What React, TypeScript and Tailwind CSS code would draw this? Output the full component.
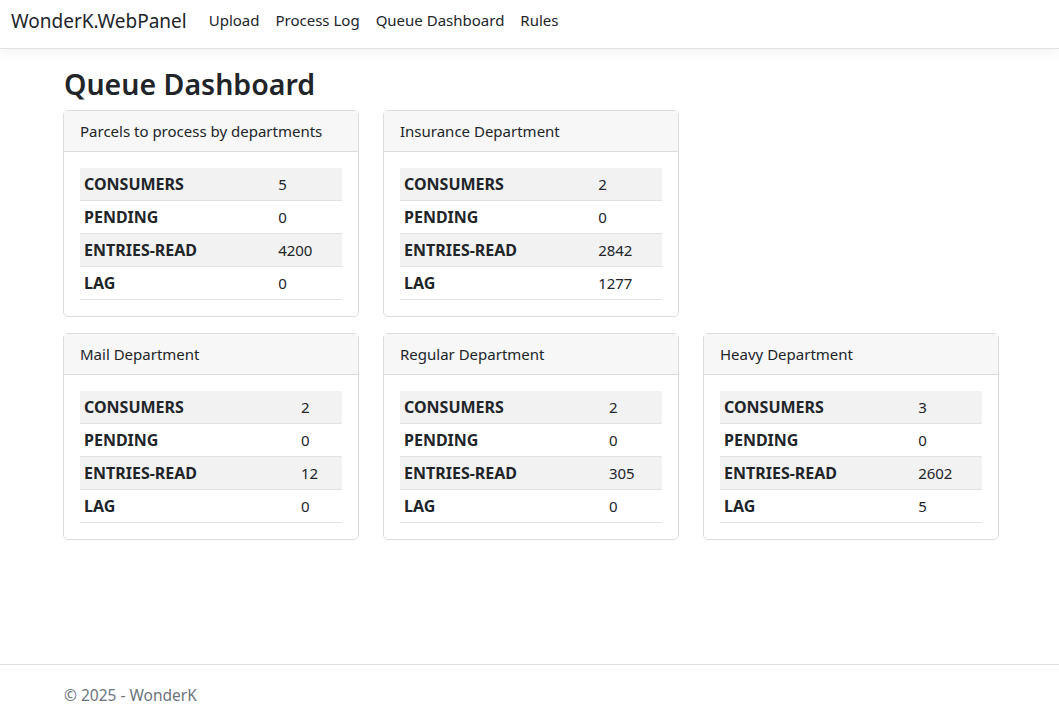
import React from "react";

type Stats = { consumers: number; pending: number; entriesRead: number; lag: number };

const groups: { title: string; stats: Stats | null }[] = [
  { title: "Parcels to process by departments", stats: { consumers: 5, pending: 0, entriesRead: 4200, lag: 0 } },
  { title: "Insurance Department", stats: { consumers: 2, pending: 0, entriesRead: 2842, lag: 1277 } },
  { title: "", stats: null },
  { title: "Mail Department", stats: { consumers: 2, pending: 0, entriesRead: 12, lag: 0 } },
  { title: "Regular Department", stats: { consumers: 2, pending: 0, entriesRead: 305, lag: 0 } },
  { title: "Heavy Department", stats: { consumers: 3, pending: 0, entriesRead: 2602, lag: 5 } },
];

function QueueCard({ title, stats }: { title: string; stats: Stats }) {
  const rows: [string, number][] = [
    ["CONSUMERS", stats.consumers],
    ["PENDING", stats.pending],
    ["ENTRIES-READ", stats.entriesRead],
    ["LAG", stats.lag],
  ];
  return (
    <div className="rounded-[5px] border border-[#dcdcdc] bg-white">
      <div className="border-b border-[#dcdcdc] bg-[#f7f7f7] px-4 py-2 text-[15px] leading-6 text-[#212529]">{title}</div>
      <div className="p-4">
        <table className="w-full border-collapse text-[15px] leading-6 text-[#212529]">
          <tbody>
            {rows.map(([label, value], i) => (
              <tr key={label} className={`border-b border-[#dee2e6] ${i % 2 === 0 ? "bg-[#f2f2f2]" : ""}`}>
                <td className="px-1 py-1 text-[16px] font-bold">{label}</td>
                <td className="px-1 py-1">{value}</td>
              </tr>
            ))}
          </tbody>
        </table>
      </div>
    </div>
  );
}

export default function App() {
  return (
    <div className="flex min-h-screen flex-col bg-white font-['Noto_Sans',sans-serif] text-[#212529]">
      <header className="border-b border-[#dee2e6] bg-white shadow-[0_4px_12px_rgba(0,0,0,0.05)]">
        <nav className="flex h-[48px] items-start pl-[11px] pt-[7px]">
          <a href="#" className="mr-[22px] text-[19px] leading-7 text-[#212529]">WonderK.WebPanel</a>
          <div className="flex items-center gap-4 pt-[1px] text-[15px] leading-6 text-[#212529]">
            <a href="#">Upload</a>
            <a href="#">Process Log</a>
            <a href="#">Queue Dashboard</a>
            <a href="#">Rules</a>
          </div>
        </nav>
      </header>

      <main className="flex-1 pl-[63px] pt-[17px]">
        <h1 className="mb-[8px] pl-px text-[28.5px] font-semibold leading-[36px]">Queue Dashboard</h1>
        <div className="grid grid-cols-[296px_296px_296px] gap-x-6 gap-y-4">
          {groups.map((g, i) =>
            g.stats ? <QueueCard key={i} title={g.title} stats={g.stats} /> : <div key={i} />
          )}
        </div>
      </main>

      <footer className="border-t border-[#dee2e6] pl-[64px] pt-[2px] text-[15.5px] leading-[56px] text-[#6c757d]">
        © 2025 - WonderK
      </footer>
    </div>
  );
}
